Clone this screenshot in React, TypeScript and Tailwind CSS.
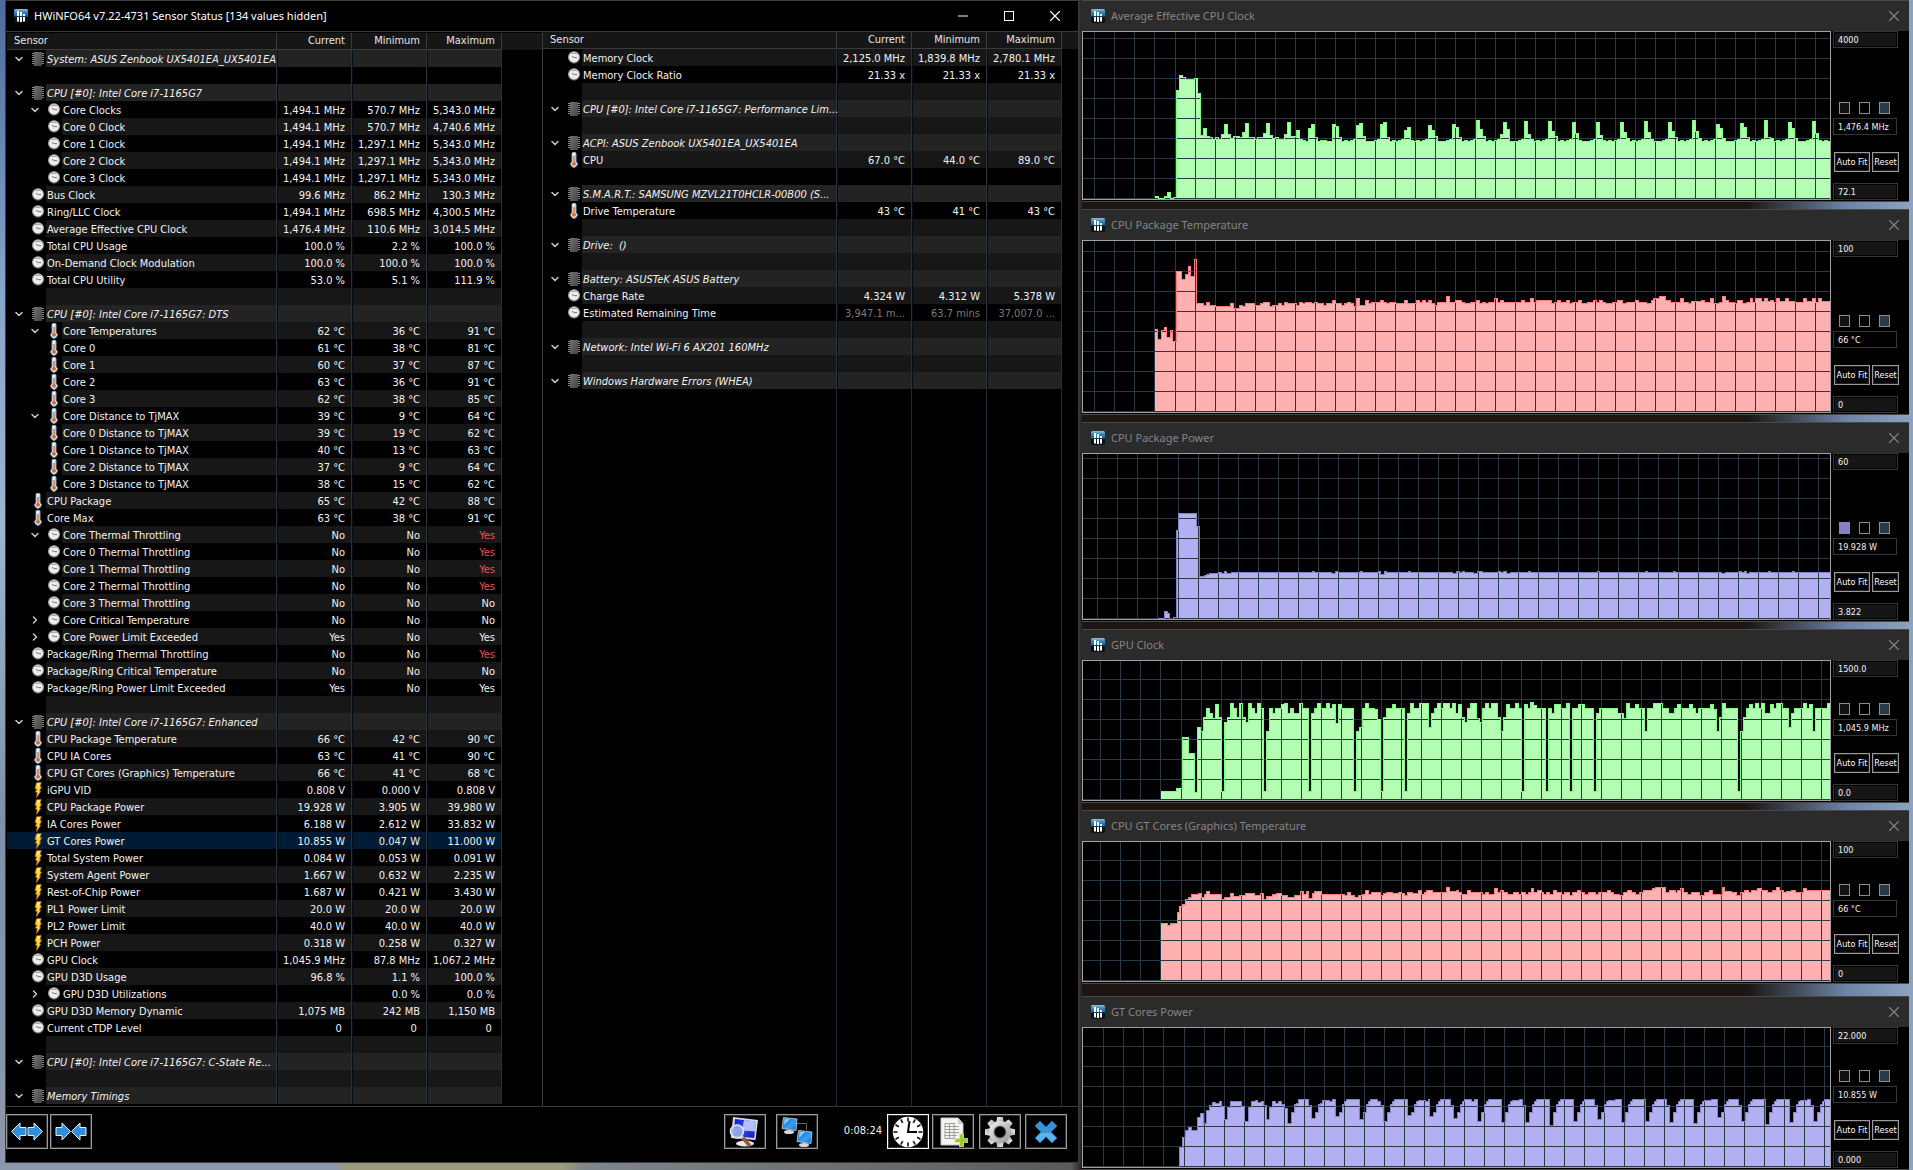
import type { ReactNode } from "react";
import { ChevronDown, ChevronRight, Minus, Square, X } from "lucide-react";

/* ---------- icons ---------- */

function AppIcon() {
  return (
    <svg viewBox="0 0 14 14" className="size-[14px] shrink-0" aria-hidden="true">
      <defs>
        <linearGradient id="app-top" x1="0" y1="0" x2="0" y2="1">
          <stop offset="0" stopColor="#9cc0d8" />
          <stop offset="0.4" stopColor="#3c86b8" />
          <stop offset="1" stopColor="#0f66a6" />
        </linearGradient>
      </defs>
      <rect width="14" height="14" rx="1.5" fill="#0c1116" />
      <path d="M1.500 0h11A1.500 1.500 0 0 1 14 1.500V7.500H0V1.500A1.500 1.500 0 0 1 1.500 0z" fill="url(#app-top)" />
      <path d="M3 2h2v5H3zM6 3h2v4H6zM9 5h2v2H9zM3 8h2v4.500H3zM6 8h2v5H6zM9 8h2v4.500H9z" fill="#fff" />
    </svg>
  );
}

function ChipIcon() {
  return (
    <svg viewBox="0 0 12 14" className="h-[14px] w-3" aria-hidden="true">
      <defs>
        <linearGradient id="chip" x1="0" y1="0" x2="1" y2="1">
          <stop offset="0" stopColor="#707070" />
          <stop offset="1" stopColor="#454545" />
        </linearGradient>
      </defs>
      <g shapeRendering="crispEdges">
        <path d="M0 1.500h12M0 3.500h12M0 5.500h12M0 7.500h12M0 9.500h12M0 11.500h12" stroke="#8a8a8a" />
        <rect x="2" width="8" height="14" fill="url(#chip)" />
      </g>
    </svg>
  );
}

function DialIcon() {
  return (
    <svg viewBox="0 0 12 13" className="h-[13px] w-3" aria-hidden="true">
      <circle cx="6" cy="7" r="5.800" fill="#555" />
      <circle cx="6" cy="6" r="5.800" fill="#bdbdbd" />
      <circle cx="6" cy="6.500" r="4.700" fill="#efedea" />
      <path d="M2.500 2.500h7" stroke="#a9a9a9" />
      <path d="M4 5.500L6.500 6.600l2.500.1" stroke="#77706c" fill="none" />
    </svg>
  );
}

function ThermoIcon() {
  return (
    <svg viewBox="0 0 8 16" className="h-4 w-2" aria-hidden="true">
      <path d="M2 1.500a2 1.500 0 0 1 4 0V9.500a3.200 3.200 0 1 1-4 0z" fill="#f2f8fc" stroke="#6fa5d2" />
      <path d="M3.300 4h1.400v6a2 2 0 1 1-1.400 0z" fill="#f0640f" />
      <path d="M4.700 3.500h1M4.700 5.500h1M4.700 7.500h1" stroke="#999" strokeWidth="0.600" />
    </svg>
  );
}

function BoltIcon() {
  return (
    <svg viewBox="0 0 8 16" className="h-4 w-2" aria-hidden="true">
      <path d="M2.500 0.800L7.300 0.500 6 4.500 7.500 5 5.500 9 6.600 9.500 2.500 15.500 3.200 10.500 1.500 10 2.800 7 1 6.500z" fill="#fbd928" stroke="#c06a1c" strokeWidth="0.700" />
      <path d="M3 1.500l3-.2L4.500 5z" fill="#fff3b8" />
    </svg>
  );
}

function ExpandIcon() {
  return (
    <svg viewBox="0 0 36 29" className="h-[29px] w-9" aria-hidden="true">
      <g fill="#2f8fdd" stroke="#e6f2fb" strokeWidth="1" strokeLinejoin="round">
        <path d="M17 10.500H11V6L2.500 14.500 11 23v-4.500h6z" />
        <path d="M19 10.500h6V6l8.500 8.500L25 23v-4.500h-6z" />
      </g>
    </svg>
  );
}

function CollapseIcon() {
  return (
    <svg viewBox="0 0 36 29" className="h-[29px] w-9" aria-hidden="true">
      <g fill="#2f8fdd" stroke="#e6f2fb" strokeWidth="1" strokeLinejoin="round">
        <path d="M3 10.500h6V6l8.500 8.500L9 23v-4.500H3z" />
        <path d="M33 10.500h-6V6l-8.500 8.500L27 23v-4.500h6z" />
      </g>
    </svg>
  );
}

function InspectIcon() {
  return (
    <svg viewBox="0 0 36 31" className="h-[31px] w-9" aria-hidden="true">
      <defs>
        <linearGradient id="scr" x1="0" y1="0" x2="1" y2="1">
          <stop offset="0" stopColor="#0a12d8" />
          <stop offset="0.450" stopColor="#3a50e8" />
          <stop offset="1" stopColor="#0a14b8" />
        </linearGradient>
      </defs>
      <ellipse cx="18" cy="27.500" rx="9" ry="3" fill="#e8e8e8" />
      <path d="M6 1l25 3-2.500 20L4 22z" fill="#d8dadf" />
      <path d="M8 3l21 2.500L27.200 22 6.500 20z" fill="url(#scr)" />
      <path d="M17 4.100l12 1.400-.9 10-13-1z" fill="#c3cdf8" fillOpacity="0.900" />
      <circle cx="10" cy="15.500" r="6.500" fill="#9db4e6" fillOpacity="0.850" stroke="#dfe5ee" strokeWidth="1.600" />
      <path d="M14.500 20.500l2.500 2.500" stroke="#ccc" strokeWidth="3" />
      <path d="M17 23l5 6" stroke="#8d5a3a" strokeWidth="3.600" strokeLinecap="round" />
    </svg>
  );
}

function NetworkIcon() {
  return (
    <svg viewBox="0 0 36 31" className="h-[31px] w-9" aria-hidden="true">
      <defs>
        <linearGradient id="net" x1="0" y1="0" x2="1" y2="1">
          <stop offset="0" stopColor="#0a62c4" />
          <stop offset="0.600" stopColor="#3aa0ee" />
          <stop offset="1" stopColor="#0b66c8" />
        </linearGradient>
      </defs>
      <path d="M17 7.500h10.500V14" stroke="#666" fill="none" />
      <ellipse cx="10" cy="16" rx="5" ry="2" fill="#d8d8d8" />
      <path d="M4.500 1.500L18 3l-1 11.500L3 12.500z" fill="url(#net)" stroke="#cfd4da" strokeWidth="0.800" />
      <path d="M5.500 2.500L11 3 5 9z" fill="#8fcbf7" />
      <ellipse cx="25" cy="29" rx="5" ry="2" fill="#d8d8d8" />
      <path d="M19.500 14.500L33 16l-1 11.500L18 25.500z" fill="url(#net)" stroke="#cfd4da" strokeWidth="0.800" />
      <path d="M20.500 15.500L26 16l-6 6z" fill="#8fcbf7" />
    </svg>
  );
}

function ClockIcon() {
  return (
    <svg viewBox="-16 -16 32 32" className="size-8" aria-hidden="true">
      <circle r="15.200" fill="#fff" />
      <g stroke="#111" strokeWidth="1.600">
        {[0, 30, 60, 90, 120, 150, 180, 210, 240, 270, 300, 330].map((a) => (
          <path key={a} d="M0 -14.500V-10.500" transform={`rotate(${a})`} />
        ))}
      </g>
      <path d="M1.500 -11L0 0h9" stroke="#000" strokeWidth="2" fill="none" />
    </svg>
  );
}

function LogIcon() {
  return (
    <svg viewBox="0 0 30 30" className="size-[30px]" aria-hidden="true">
      <path d="M3 1h17l5 5.500V28H3z" fill="#f4f4f2" stroke="#c8c8c8" />
      <path d="M20 1v6h5z" fill="#cfcfcf" />
      <path d="M7 6.500h10M7 9.500h14M7 12.500h14M7 15.500h14M7 18.500h12M7 21.500h10M7 6.500v15M11.500 6.500v15M16 6.500v15" stroke="#8b8b8b" strokeWidth="0.800" fill="none" />
      <path d="M21.500 17h4v4.500H30v4h-4.500V30h-4v-4.500H17v-4h4.500z" fill="#9ccc34" stroke="#d9efae" strokeWidth="0.700" />
    </svg>
  );
}

function GearIcon() {
  return (
    <svg viewBox="-16 -16 32 32" className="size-8" aria-hidden="true">
      <defs>
        <linearGradient id="gear" x1="0" y1="0" x2="1" y2="1">
          <stop offset="0" stopColor="#f0f0f0" />
          <stop offset="0.550" stopColor="#c4c4c4" />
          <stop offset="1" stopColor="#8e8e8e" />
        </linearGradient>
      </defs>
      <g fill="url(#gear)">
        {[0, 45, 90, 135, 180, 225, 270, 315].map((a) => (
          <path key={a} d="M-4 -9L-2.800 -15H2.800L4 -9z" transform={`rotate(${a})`} />
        ))}
        <circle r="11" />
      </g>
      <circle r="6.600" fill="#777" />
      <circle r="5.400" fill="#000" />
    </svg>
  );
}

function CrossIcon() {
  return (
    <svg viewBox="0 0 24 24" className="size-6" aria-hidden="true">
      <path d="M6 1l6 6 6-6 5 5-6 6 6 6-5 5-6-6-6 6-5-5 6-6-6-6z" fill="#3593d8" stroke="#1e6dac" strokeWidth="0.800" strokeLinejoin="round" />
      <path d="M6 22l6-6 6 6 4-4-5-5H7l-5 5z" fill="#5db4ee" />
    </svg>
  );
}

/* ---------- sensor data ---------- */

type Kind = "group" | "dial" | "temp" | "power" | "blank";
type Row = {
  kind: Kind;
  name: string;
  values: string[];
  deep?: boolean;
  open?: boolean;
  dim?: boolean;
  selected?: boolean;
};

const group = (name: string): Row => ({ kind: "group", name, values: ["", "", ""], open: true });
const blank = (): Row => ({ kind: "blank", name: "", values: ["", "", ""] });
const row = (kind: Kind, name: string, a: string, b: string, c: string, extra: Partial<Row> = {}): Row => ({
  kind,
  name,
  values: [a, b, c],
  ...extra,
});
const deep = { deep: true };
const deepOpen = { deep: true, open: true };
const deepShut = { deep: true, open: false };

const leftRows: Row[] = [
  group("System: ASUS Zenbook UX5401EA_UX5401EA"),
  blank(),
  group("CPU [#0]: Intel Core i7-1165G7"),
  row("dial", "Core Clocks", "1,494.1 MHz", "570.7 MHz", "5,343.0 MHz", deepOpen),
  row("dial", "Core 0 Clock", "1,494.1 MHz", "570.7 MHz", "4,740.6 MHz", deep),
  row("dial", "Core 1 Clock", "1,494.1 MHz", "1,297.1 MHz", "5,343.0 MHz", deep),
  row("dial", "Core 2 Clock", "1,494.1 MHz", "1,297.1 MHz", "5,343.0 MHz", deep),
  row("dial", "Core 3 Clock", "1,494.1 MHz", "1,297.1 MHz", "5,343.0 MHz", deep),
  row("dial", "Bus Clock", "99.6 MHz", "86.2 MHz", "130.3 MHz"),
  row("dial", "Ring/LLC Clock", "1,494.1 MHz", "698.5 MHz", "4,300.5 MHz"),
  row("dial", "Average Effective CPU Clock", "1,476.4 MHz", "110.6 MHz", "3,014.5 MHz"),
  row("dial", "Total CPU Usage", "100.0 %", "2.2 %", "100.0 %"),
  row("dial", "On-Demand Clock Modulation", "100.0 %", "100.0 %", "100.0 %"),
  row("dial", "Total CPU Utility", "53.0 %", "5.1 %", "111.9 %"),
  blank(),
  group("CPU [#0]: Intel Core i7-1165G7: DTS"),
  row("temp", "Core Temperatures", "62 °C", "36 °C", "91 °C", deepOpen),
  row("temp", "Core 0", "61 °C", "38 °C", "81 °C", deep),
  row("temp", "Core 1", "60 °C", "37 °C", "87 °C", deep),
  row("temp", "Core 2", "63 °C", "36 °C", "91 °C", deep),
  row("temp", "Core 3", "62 °C", "38 °C", "85 °C", deep),
  row("temp", "Core Distance to TjMAX", "39 °C", "9 °C", "64 °C", deepOpen),
  row("temp", "Core 0 Distance to TjMAX", "39 °C", "19 °C", "62 °C", deep),
  row("temp", "Core 1 Distance to TjMAX", "40 °C", "13 °C", "63 °C", deep),
  row("temp", "Core 2 Distance to TjMAX", "37 °C", "9 °C", "64 °C", deep),
  row("temp", "Core 3 Distance to TjMAX", "38 °C", "15 °C", "62 °C", deep),
  row("temp", "CPU Package", "65 °C", "42 °C", "88 °C"),
  row("temp", "Core Max", "63 °C", "38 °C", "91 °C"),
  row("dial", "Core Thermal Throttling", "No", "No", "Yes!", deepOpen),
  row("dial", "Core 0 Thermal Throttling", "No", "No", "Yes!", deep),
  row("dial", "Core 1 Thermal Throttling", "No", "No", "Yes!", deep),
  row("dial", "Core 2 Thermal Throttling", "No", "No", "Yes!", deep),
  row("dial", "Core 3 Thermal Throttling", "No", "No", "No", deep),
  row("dial", "Core Critical Temperature", "No", "No", "No", deepShut),
  row("dial", "Core Power Limit Exceeded", "Yes", "No", "Yes", deepShut),
  row("dial", "Package/Ring Thermal Throttling", "No", "No", "Yes!"),
  row("dial", "Package/Ring Critical Temperature", "No", "No", "No"),
  row("dial", "Package/Ring Power Limit Exceeded", "Yes", "No", "Yes"),
  blank(),
  group("CPU [#0]: Intel Core i7-1165G7: Enhanced"),
  row("temp", "CPU Package Temperature", "66 °C", "42 °C", "90 °C"),
  row("temp", "CPU IA Cores", "63 °C", "41 °C", "90 °C"),
  row("temp", "CPU GT Cores (Graphics) Temperature", "66 °C", "41 °C", "68 °C"),
  row("power", "iGPU VID", "0.808 V", "0.000 V", "0.808 V"),
  row("power", "CPU Package Power", "19.928 W", "3.905 W", "39.980 W"),
  row("power", "IA Cores Power", "6.188 W", "2.612 W", "33.832 W"),
  row("power", "GT Cores Power", "10.855 W", "0.047 W", "11.000 W", { selected: true }),
  row("power", "Total System Power", "0.084 W", "0.053 W", "0.091 W"),
  row("power", "System Agent Power", "1.667 W", "0.632 W", "2.235 W"),
  row("power", "Rest-of-Chip Power", "1.687 W", "0.421 W", "3.430 W"),
  row("power", "PL1 Power Limit", "20.0 W", "20.0 W", "20.0 W"),
  row("power", "PL2 Power Limit", "40.0 W", "40.0 W", "40.0 W"),
  row("power", "PCH Power", "0.318 W", "0.258 W", "0.327 W"),
  row("dial", "GPU Clock", "1,045.9 MHz", "87.8 MHz", "1,067.2 MHz"),
  row("dial", "GPU D3D Usage", "96.8 %", "1.1 %", "100.0 %"),
  row("dial", "GPU D3D Utilizations", "", "0.0 %", "0.0 %", deepShut),
  row("dial", "GPU D3D Memory Dynamic", "1,075 MB", "242 MB", "1,150 MB"),
  row("dial", "Current cTDP Level", "0 ", "0 ", "0 "),
  blank(),
  group("CPU [#0]: Intel Core i7-1165G7: C-State Re..."),
  blank(),
  group("Memory Timings"),
];

const rightRows: Row[] = [
  row("dial", "Memory Clock", "2,125.0 MHz", "1,839.8 MHz", "2,780.1 MHz"),
  row("dial", "Memory Clock Ratio", "21.33 x", "21.33 x", "21.33 x"),
  blank(),
  group("CPU [#0]: Intel Core i7-1165G7: Performance Lim..."),
  blank(),
  group("ACPI: ASUS Zenbook UX5401EA_UX5401EA"),
  row("temp", "CPU", "67.0 °C", "44.0 °C", "89.0 °C"),
  blank(),
  group("S.M.A.R.T.: SAMSUNG MZVL21T0HCLR-00B00 (S..."),
  row("temp", "Drive Temperature", "43 °C", "41 °C", "43 °C"),
  blank(),
  group("Drive:  ()"),
  blank(),
  group("Battery: ASUSTeK ASUS Battery"),
  row("dial", "Charge Rate", "4.324 W", "4.312 W", "5.378 W"),
  row("dial", "Estimated Remaining Time", "3,947.1 m...", "63.7 mins", "37,007.0 ...", { dim: true }),
  blank(),
  group("Network: Intel Wi-Fi 6 AX201 160MHz"),
  blank(),
  group("Windows Hardware Errors (WHEA)"),
];

const icons: Record<Kind, ReactNode> = {
  group: <ChipIcon />,
  dial: <DialIcon />,
  temp: <ThermoIcon />,
  power: <BoltIcon />,
  blank: null,
};

function shade(r: Row, index: number) {
  if (r.selected) return "bg-[#001b33]";
  if (r.kind === "group") return "bg-[#232323]";
  return index % 2 === 0 ? "bg-[#171717]" : "bg-black";
}

function SensorRow({ r, index }: { r: Row; index: number }) {
  const bg = shade(r, index);
  return (
    <tr className="h-[17px]">
      <th scope="row" className={`border-r border-[#2a3038] p-0 text-left font-normal ${r.selected ? "bg-[#001b33]" : ""}`}>
        <div className={`flex h-[17px] ${r.deep ? "pl-4" : ""}`}>
          <div className="flex w-6 shrink-0 items-center justify-center">
            {r.open !== undefined && (
              <button type="button" aria-label={`Toggle ${r.name}`} aria-expanded={r.open} className="text-[#c8c8c8]">
                {r.open ? <ChevronDown className="size-3" strokeWidth={3} /> : <ChevronRight className="size-3" strokeWidth={3} />}
              </button>
            )}
          </div>
          <div className="flex w-[15px] shrink-0 items-center justify-center pr-[2px]">{icons[r.kind]}</div>
          <div className={`min-w-0 flex-1 whitespace-pre pt-[2px] pl-px ${bg} ${r.kind === "group" ? "italic" : ""}`}>{r.name}</div>
        </div>
      </th>
      {r.values.map((v, i) => {
        const alert = v.endsWith("!");
        return (
          <td
            key={i}
            className={`overflow-hidden whitespace-pre border-r border-l border-r-[#2a3038] border-l-[#050d18] p-0 pt-[2px] pr-[6px] text-right ${bg} ${
              alert ? "text-[#f0504c]" : r.dim ? "text-[#7a7a7a]" : ""
            }`}
          >
            {alert ? v.slice(0, -1) : v}
          </td>
        );
      })}
      <td className="p-0" />
    </tr>
  );
}

function SensorTable({ rows, narrow }: { rows: Row[]; narrow?: boolean }) {
  return (
    <table className="w-full table-fixed border-separate border-spacing-0 text-[11px] leading-[15px]">
      <colgroup>
        <col className={narrow ? "w-[270px]" : "w-[294px]"} />
        <col className="w-[75px]" />
        <col className="w-[75px]" />
        <col className="w-[75px]" />
        <col />
      </colgroup>
      <thead>
        <tr className="h-[17px] bg-[#161616] text-[#e6e6e6]">
          <th scope="col" className="border-r border-b border-[#3a3a3a] p-0 pl-[7px] text-left leading-4 font-normal">
            Sensor
          </th>
          {["Current", "Minimum", "Maximum"].map((h) => (
            <th key={h} scope="col" className="border-r border-b border-[#3a3a3a] p-0 pr-[6px] text-right leading-4 font-normal">
              {h}
            </th>
          ))}
          <th className="p-0" />
        </tr>
      </thead>
      <tbody>
        {rows.map((r, i) => (
          <SensorRow key={i} r={r} index={i} />
        ))}
      </tbody>
    </table>
  );
}

function ToolButton({ label, active, className = "", children }: { label: string; active?: boolean; className?: string; children: ReactNode }) {
  return (
    <button
      type="button"
      aria-label={label}
      className={`flex h-[35px] w-[42px] items-center justify-center overflow-hidden border bg-black shadow-[inset_0_0_0_1px_#333] ${
        active ? "border-white" : "border-[#9a9a9a]"
      } ${className}`}
    >
      {children}
    </button>
  );
}

function SensorWindow() {
  return (
    <section className="flex flex-col border border-[#3c3c3c] bg-black text-[#f2f2f2]">
      <header className="flex h-[30px] items-center pl-2 text-white">
        <AppIcon />
        <h1 className="flex-1 pl-[6px] font-['Noto_Sans','Open_Sans',sans-serif] text-[11px]">
          HWiNFO64 v7.22-4731 Sensor Status [134 values hidden]
        </h1>
        <button type="button" aria-label="Minimize" className="flex h-full w-[46px] items-center justify-center">
          <Minus className="size-4" strokeWidth={1.5} />
        </button>
        <button type="button" aria-label="Maximize" className="flex h-full w-[46px] items-center justify-center">
          <span className="size-[10px] border border-white" />
        </button>
        <button type="button" aria-label="Close" className="flex h-full w-[46px] items-center justify-center">
          <X className="size-[18px]" strokeWidth={1.5} />
        </button>
      </header>
      <div className="grid flex-1 grid-cols-2 border-y border-[#3a3a3a]">
        <div className="pt-px pb-[2px] pl-px">
          <SensorTable rows={leftRows} narrow />
        </div>
        <div className="flex flex-col border-l border-[#3a3a3a]">
          <SensorTable rows={rightRows} />
          <div className="grid flex-1 grid-cols-[294px_75px_75px_75px_1fr]" aria-hidden="true">
            {[0, 1, 2, 3].map((i) => (
              <div key={i} className="border-r border-[#222830]" />
            ))}
          </div>
        </div>
      </div>
      <footer className="flex items-center pt-[7px] pr-[11px] pb-[13px]">
        <ToolButton label="Expand columns">
          <ExpandIcon />
        </ToolButton>
        <ToolButton label="Shrink columns" className="ml-[2px]">
          <CollapseIcon />
        </ToolButton>
        <ToolButton label="Hide sensors" className="ml-auto">
          <InspectIcon />
        </ToolButton>
        <ToolButton label="Remote monitoring" className="ml-[10px]">
          <NetworkIcon />
        </ToolButton>
        <time className="mr-[5px] ml-[26px] text-[11px]">0:08:24</time>
        <ToolButton label="Reset clock" active>
          <ClockIcon />
        </ToolButton>
        <ToolButton label="Start logging" className="ml-[3px]">
          <LogIcon />
        </ToolButton>
        <ToolButton label="Settings" className="ml-[5px]">
          <GearIcon />
        </ToolButton>
        <ToolButton label="Close sensors" className="ml-1">
          <CrossIcon />
        </ToolButton>
      </footer>
    </section>
  );
}

/* ---------- graphs ---------- */

/* A series is a list of [start, top] steps; each step lasts until the next one starts. */
type Step = [number, number];

const steps = (text: string): Step[] =>
  text
    .trim()
    .split(/\s+/)
    .map((p) => p.split(":").map(Number) as Step);

const clockPeaks = [
  [92, 94, 105], [93, 91, 104], [92, 90, 105], [98, 95, 108], [93, 98, 104], [92, 95, 105], [88, 97, 104],
  [102, 90, 97], [89, 102, 107], [89, 99, 104], [90, 101, 108], [90, 103, 108], [90, 100, 106], [89, 100, 107],
  [90, 99, 105], [88, 99, 106], [92, 96, 106], [91, 95, 105], [88, 105, 106], [90, 96, 106], [89, 101, 108],
];

const cpuClock: Step[] = [
  ...steps(`72:164 75:166 81:164 84:160 87:166 90:165 93:58 96:43 99:45 102:47 111:46 114:61 117:103 120:96 123:104
    126:105 129:107 132:105 135:107 138:102 141:92 144:102 147:106 150:104 156:105 159:100 162:91 165:105 171:107
    174:105 180:101 183:91 186:103 189:106 192:105 195:107 201:102 204:90 207:104 213:98 216:107 219:108 222:109
    225:96 228:92 231:105 234:109 237:108 243:109`),
  ...clockPeaks.flatMap(([a, b, c], k): Step[] => {
    const x = 249 + k * 24;
    return [
      [x, a],
      [x + 3, b],
      [x + 6, c],
      [x + 9, 109],
      [x + 12, k % 3 === 1 ? 109 : 108],
      [x + 15, 109],
      [x + 18, 108],
      [x + 21, 107],
    ];
  }),
];

const packageTemp = steps(`72:88 74:98 78:89 81:86 83:96 87:89 89:100 93:30 98:38 102:33 105:25 107:35 111:18 113:62
  120:64 123:61 126:64 132:65 147:62 150:67 156:64 159:65 162:62 171:64 177:62 180:61 186:65 189:64 195:62 198:64
  201:61 204:62 213:64 216:61 219:62 222:61 228:62 231:61 234:62 240:64 243:62 249:59 252:62 258:64 261:62 264:61
  267:62 270:65 273:57 276:64 282:59 285:62 288:61 297:59 300:61 303:62 306:61 312:62 321:59 324:62 333:59 336:61
  339:59 342:61 345:59 348:62 351:64 354:61 363:55 366:61 372:59 378:61 381:62 387:61 393:59 396:62 399:61 402:62
  405:61 411:57 414:61 417:59 420:61 438:59 441:61 447:57 450:61 453:59 468:62 471:61 474:59 477:61 483:59 486:62
  489:61 495:59 498:62 504:61 510:59 513:61 516:59 519:61 522:62 529:61 534:59 539:62 543:61 552:59 555:61 563:62
  568:59 570:57 576:55 582:59 587:61 597:57 600:61 605:62 608:60 618:59 621:61 627:57 630:62 636:61 639:55 642:59
  645:61 651:62 654:59 659:62 663:61 667:57 669:61 672:57 678:60 681:57 684:60 687:59 690:61 693:57 696:60 702:57
  705:60 711:61 720:57 723:60 729:57 732:61 735:57 738:60`);

const packagePower = steps(`74:164 81:157 84:159 86:165 90:163 93:76 95:59 113:72 116:122 121:121 123:120 126:119 135:118
  138:119 141:117 143:119 148:118 229:117 231:118 248:119 252:117 254:118 277:117 279:118 295:117 297:120 301:117
  303:118 325:117 327:118 369:119 373:117 376:118 379:117 381:118 390:119 394:117 399:118 415:117 417:118 420:117
  423:119 427:118 445:117 447:118 514:117 516:118 562:117 564:118 590:117 592:118 638:119 642:118 656:117 658:118
  661:117 663:119 666:118 685:117 687:118 709:117 711:118`);

const gpuClock = steps(`78:130 93:127 99:76 105:92 111:131 114:66 117:70 120:56 123:47 126:52 129:57 132:43 135:56 138:130
  141:61 144:56 147:42 150:47 153:56 156:42 159:56 162:61 165:42 168:47 171:52 174:42 177:47 180:130 183:70 186:47
  189:52 192:47 198:43 201:42 204:52 207:47 210:52 216:42 219:47 225:130 228:52 231:47 234:42 237:47 243:42 246:47
  249:43 252:62 255:43 258:47 270:130 273:70 276:66 279:47 282:42 285:47 291:48 294:58 297:130 300:56 303:47 309:43
  312:47 321:130 324:52 327:42 330:47 336:42 345:66 348:52 351:47 354:42 357:47 360:42 366:47 369:42 372:52 375:43
  378:56 381:61 384:47 387:42 393:57 396:61 399:47 402:42 405:47 408:42 414:56 417:70 420:56 423:43 426:47 432:42
  435:47 438:130 441:43 444:47 447:41 450:44 453:47 462:130 465:47 468:52 471:43 477:47 483:42 486:130 489:47 495:43
  501:47 510:130 513:52 516:47 534:52 540:57 543:42 546:47 552:43 555:47 561:70 564:47 570:42 579:47 585:52 591:47
  594:43 597:47 606:43 609:47 612:52 615:47 627:43 630:48 633:70 636:56 639:42 642:47 654:130 657:70 660:56 663:47
  666:43 669:47 672:42 675:47 678:42 681:52 687:43 690:47 693:42 699:47 705:66 708:52 711:47 720:42 723:47 726:43
  729:70 732:47 744:42`);

const gtTemp = steps(`78:81 84:83 87:81 94:70 96:64 99:62 102:57 105:55 108:52 115:51 118:55 121:52 123:49 126:52 138:57
  141:55 147:51 150:54 156:53 162:51 171:53 177:51 180:57 183:54 189:52 193:51 198:53 204:55 211:53 217:49 220:52
  223:49 225:56 229:51 231:49 238:52 261:53 264:50 267:53 271:55 275:53 279:52 282:48 285:52 288:50 297:53 300:51
  303:50 309:51 315:50 318:51 321:53 324:50 329:51 335:48 338:52 341:50 343:48 349:50 363:45 366:49 373:48 375:50
  378:52 384:48 387:50 399:52 402:50 405:52 411:46 414:50 417:48 420:50 424:52 430:50 435:52 438:50 442:52 445:50
  448:46 450:50 454:48 458:50 460:52 463:50 466:52 470:48 473:50 478:52 481:50 486:53 489:50 494:48 497:50 501:52
  505:50 512:52 515:50 524:48 527:50 530:52 536:53 540:50 544:48 548:50 552:52 556:50 560:48 569:46 572:45 579:45
  582:50 586:48 592:50 594:48 597:46 600:50 604:52 608:50 616:53 621:50 626:48 629:52 637:53 639:45 641:49 648:50
  653:53 657:50 661:48 665:50 668:48 674:46 678:48 684:50 689:48 693:45 696:48 700:50 703:49 708:48 712:50 720:46
  723:48`);

const gtDips = [95, 90, 88, 91, 93, 87, 88, 90, 93, 94, 94, 97, 93, 91, 94, 93, 94, 95, 89, 93, 96, 94, 93];

const gtPower: Step[] = [
  ...steps(`81:139 96:119 99:109 102:102 105:99 108:102 114:89 117:85 120:95 123:82 126:77 129:74 132:75 136:73 138:78
    141:91 144:79 147:73 158:78 161:93 165:79 168:73 172:72 174:74 178:73 180:77 183:91 186:79 189:73 192:75 195:73
    198:76 201:80`),
  ...gtDips.flatMap((d, k): Step[] => {
    const x = 204 + k * 24 - (k > 5 ? 2 : 0);
    return [
      [x, d],
      [x + 4, 84],
      [x + 7, 76],
      [x + 9, k < 2 ? 75 : 73],
      [x + 11, k % 4 === 1 ? 72 : 71],
      [x + 18, k < 8 && k % 2 ? 73 : 71],
      [x + 21, k % 3 === 0 ? 77 : 71],
    ];
  }),
];

const palettes = {
  green: { fill: "#b3ffb3", line: "#7dff7d" },
  red: { fill: "#ffb1b1", line: "#ff7d7d" },
  violet: { fill: "#b2b0f2", line: "#8482c6" },
};

type Graph = {
  title: string;
  data: Step[];
  tone: keyof typeof palettes;
  top: string;
  value: string;
  bottom: string;
  height: number;
  size: string;
  phase: number;
  swatch?: boolean;
};

const graphs: Graph[] = [
  { title: "Average Effective CPU Clock", data: cpuClock, tone: "green", top: "4000", value: "1,476.4 MHz", bottom: "72.1", height: 167, size: "h-[167px]", phase: 11 },
  { title: "CPU Package Temperature", data: packageTemp, tone: "red", top: "100", value: "66 °C", bottom: "0", height: 171, size: "h-[171px]", phase: 11 },
  { title: "CPU Package Power", data: packagePower, tone: "violet", top: "60", value: "19.928 W", bottom: "3.822", height: 165, size: "h-[165px]", phase: 14, swatch: true },
  { title: "GPU Clock", data: gpuClock, tone: "green", top: "1500.0", value: "1,045.9 MHz", bottom: "0.0", height: 139, size: "h-[139px]", phase: 17 },
  { title: "CPU GT Cores (Graphics) Temperature", data: gtTemp, tone: "red", top: "100", value: "66 °C", bottom: "0", height: 139, size: "h-[139px]", phase: 17 },
  { title: "GT Cores Power", data: gtPower, tone: "violet", top: "22.000", value: "10.855 W", bottom: "0.000", height: 139, size: "h-[139px]", phase: 20 },
];

const plotEnd = 747;

function Plot({ graph }: { graph: Graph }) {
  const { data, height, phase, tone } = graph;
  const { fill, line } = palettes[tone];
  const walk = data.map(([, y], i) => `V${y}H${i + 1 < data.length ? data[i + 1][0] : plotEnd}`).join("");
  const start = data[0][0];
  const columns = Array.from({ length: 37 }, (_, k) => phase + k * 20 + (k > 3 ? 1 : 0));
  const lines = Array.from({ length: 9 }, (_, k) => height - 1 - k * 20).filter((y) => y > 0);
  return (
    <svg className={`block w-full ${graph.size}`} shapeRendering="crispEdges" role="img" aria-label={`${graph.title} history`}>
      <path d={`M${start} ${height}${walk}V${height}z`} fill={fill} />
      <g fill="#283a48">
        {columns.map((x) => (
          <rect key={x} x={x} y="0" width="1" height={height} />
        ))}
        {lines.map((y) => (
          <rect key={y} x="0" y={y} width="100%" height="1" />
        ))}
      </g>
      <path d={`M${start} ${data[0][1]}${walk}`} fill="none" stroke={line} transform="translate(0.5 0.5)" />
    </svg>
  );
}

function GraphWindow({ graph }: { graph: Graph }) {
  const box = "border border-[#363636] px-1 text-[9px] leading-[15px] text-[#f2f2f2]";
  const push = "h-5 overflow-hidden whitespace-nowrap border border-[#9a9a9a] bg-black text-[9px] leading-4 text-white shadow-[inset_0_0_0_1px_#222]";
  const chip = "h-3 w-[11px] border border-[#8c8c8c]";
  return (
    <section className="border-t border-b border-[#484848] bg-black">
      <header className="flex h-[30px] items-center bg-[#2b2b2b] pl-[9px] text-[#858585]">
        <AppIcon />
        <h2 className="flex-1 pl-[6px] font-['Noto_Sans','Open_Sans',sans-serif] text-[11px]">{graph.title}</h2>
        <button type="button" aria-label={`Close ${graph.title}`} className="flex h-full w-[30px] items-center justify-center">
          <X className="size-[18px]" strokeWidth={1.5} />
        </button>
      </header>
      <div className="flex pb-px">
        <div className="min-w-0 flex-1 border border-[#a0a0a0]">
          <Plot graph={graph} />
        </div>
        <div className="flex w-[78px] shrink-0 flex-col pl-[2px]">
          <input aria-label={`${graph.title} upper limit`} defaultValue={graph.top} className={`h-[17px] w-[65px] bg-[#161616] shadow-[inset_0_0_0_1px_#000] ${box}`} />
          <div className="mt-auto mb-1 flex gap-[9px] pl-[6px]">
            <button type="button" aria-label="Graph colour" className={`${chip} ${graph.swatch ? "bg-[#8482c6]" : "bg-[#121212]"}`} />
            <button type="button" aria-label="Background colour" className={`${chip} bg-black`} />
            <button type="button" aria-label="Grid colour" className={`${chip} bg-[#283a48]`} />
          </div>
          <output className={`mb-[17px] block h-[17px] w-16 whitespace-nowrap bg-black pt-px ${box}`}>{graph.value}</output>
          <div className="mb-[11px] flex gap-[2px] pl-px">
            <button type="button" className={`w-9 ${push}`}>
              Auto Fit
            </button>
            <button type="button" className={`w-[27px] ${push}`}>
              Reset
            </button>
          </div>
          <input aria-label={`${graph.title} lower limit`} defaultValue={graph.bottom} className={`h-[17px] w-[65px] bg-[#161616] shadow-[inset_0_0_0_1px_#000] ${box}`} />
        </div>
      </div>
    </section>
  );
}

export default function App() {
  return (
    <main className="grid min-h-screen grid-cols-[1082fr_831fr] bg-[#1d1714] font-['DejaVu_Sans_Condensed','DejaVu_Sans',sans-serif]">
      <div className="grid bg-[linear-gradient(90deg,transparent_31%,#9c9a7c_32%,#9c9a7c_52%,#7f868c_54%,#5a5a5a_99%,#2a2420_100%),linear-gradient(180deg,#4d6a9e,#86a4cc_25%,#9db6cf_45%,#8092aa_70%,#8c98ac)] pr-[3px] pb-[7px] pl-[5px]">
        <SensorWindow />
      </div>
      <div className="flex flex-col gap-[7px] bg-[linear-gradient(90deg,#1c1512_80%,#6d84a8_92%,#8da3bf_100%)] pr-1">
        {graphs.map((g, i) => (
          <div key={g.title} className={i === 5 ? "mt-[5px]" : ""}>
            <GraphWindow graph={g} />
          </div>
        ))}
      </div>
    </main>
  );
}
